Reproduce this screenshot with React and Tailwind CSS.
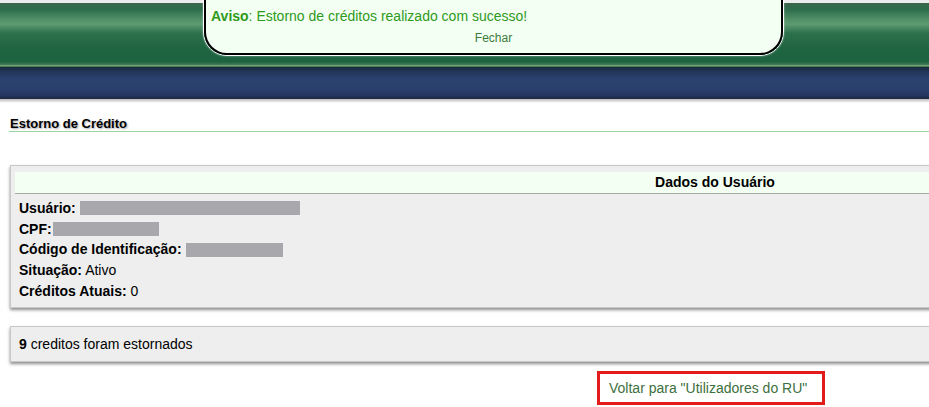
export default function App() {
  return (
    <div className="relative w-[929px] h-[407px] overflow-hidden bg-white font-['Liberation_Sans',Arial,sans-serif] text-[14px] text-black">
      {/* header */}
      <div className="h-[3px] bg-[#ececec]" />
      <div className="h-[64px] bg-[linear-gradient(to_bottom,#3b674c_0%,#2c6d4b_10%,#4f8e66_25%,#5e9b73_33%,#2d714b_47%,#1f6541_70%,#1e6340_92%,#3f7a52_96%,#7aa87c_98%,#335f40_100%)]" />
      <div className="h-[32px] bg-[linear-gradient(to_bottom,#17283a_0%,#223658_15%,#2b416f_35%,#2a3f6c_70%,#243761_88%,#1b2744_100%)]" />
      <div className="h-[4px] bg-[linear-gradient(to_bottom,#b8b8b8,#ffffff)]" />

      {/* notification */}
      <div className="absolute left-[203px] top-[-4px] w-[581px] h-[60px] rounded-b-[24px] border border-white shadow-[0_0_2px_rgba(255,255,255,0.6)]">
        <div className="h-full rounded-b-[23px] border-2 border-t-0 border-black bg-[#f3fff3] px-[5px] pt-[10px]">
          <div className="text-[14px] leading-[18px] text-[#2f9a1c]">
            <b>Aviso</b>: Estorno de créditos realizado com sucesso!
          </div>
          <div className="mt-[6px] text-center text-[12px] leading-[14px] text-[#3b7b3b]">Fechar</div>
        </div>
      </div>

      {/* title */}
      <div className="mt-[13px] ml-[9px] border-b border-[#9fd39f]">
        <div className="ml-[1px] text-[13px] font-bold leading-[15px] [text-shadow:1px_1px_2px_rgba(0,0,0,0.35)]">Estorno de Crédito</div>
      </div>

      {/* panel 1 */}
      <div className="ml-[10px] mt-[33px] w-[1410px] border border-[#c8c8c8] bg-[#eeeeee] px-[4px] pt-[6px] pb-[5px] shadow-[0_2px_3px_rgba(0,0,0,0.45)]">
        <div className="h-[22px] border-b border-[#a9a9a9] bg-[#f2fff2] text-center text-[14px] font-bold leading-[21px]">
          Dados do Usuário
        </div>
        <div className="px-[4px] pt-[4px] leading-[20.7px]">
          <div className="flex items-center">
            <b>Usuário:</b>
            <span className="ml-[4px] inline-block h-[14px] w-[220px] bg-[#a8a8ac]" />
          </div>
          <div className="flex items-center">
            <b>CPF:</b>
            <span className="ml-[1px] inline-block h-[14px] w-[106px] bg-[#a8a8ac]" />
          </div>
          <div className="flex items-center">
            <b>Código de Identificação:</b>
            <span className="ml-[4px] inline-block h-[14px] w-[97px] bg-[#a8a8ac]" />
          </div>
          <div>
            <b>Situação:</b> Ativo
          </div>
          <div>
            <b>Créditos Atuais:</b> 0
          </div>
        </div>
      </div>

      {/* panel 2 */}
      <div className="ml-[10px] mt-[18px] w-[1410px] h-[36px] border border-[#c8c8c8] bg-[#eeeeee] px-[8px] leading-[35px] shadow-[0_2px_3px_rgba(0,0,0,0.45)]">
        <b>9</b> creditos foram estornados
      </div>

      {/* link */}
      <div className="ml-[597px] mt-[9px] w-fit border-[3px] border-[#e31b1b] pl-[9px] pr-[15px] py-[5px] leading-[18px] text-[#3d7040]">
        Voltar para "Utilizadores do RU"
      </div>
    </div>
  );
}
